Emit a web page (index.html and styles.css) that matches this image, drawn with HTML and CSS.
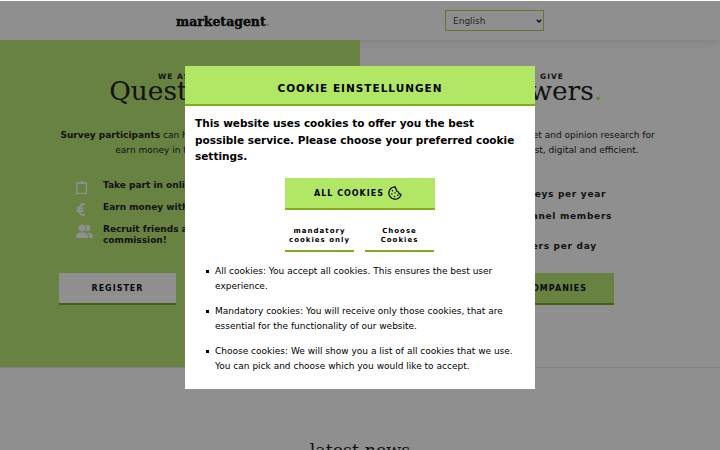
FILE: index.html
```
<!DOCTYPE html>
<html lang="en">
<head>
  <meta charset="UTF-8">
  <title>marketagent.</title>
  <link rel="stylesheet" href="styles.css">
</head>
<body>
  <header class="header">
    <svg class="logo" width="96" height="24" viewBox="0 0 96 24">
      <text x="0" y="16" textLength="94" lengthAdjust="spacingAndGlyphs">marketagent<tspan class="dot">.</tspan></text>
    </svg>
    <div class="language-box">
      <select class="language">
        <option>English</option>
        <option>Deutsch</option>
      </select>
      <svg class="arrow" width="6" height="4" viewBox="0 0 6 4"><path d="M.8.8 3 3 5.200.8" fill="none" stroke="#111" stroke-width="1.300"/></svg>
    </div>
  </header>

  <main class="split">
    <section class="side participants">
      <div class="kicker">WE ASK</div>
      <h1>Questions.</h1>
      <p class="intro"><b>Survey participants</b> can have a say in surveys and<br>earn money in the free time.</p>
      <ul class="benefits">
        <li>
          <svg width="18" height="16" viewBox="0 0 18 16"><path d="M.8 2.800h9.600v10.600H.8z" fill="none" stroke="currentColor" stroke-width="1.400" stroke-linejoin="round"/><path d="M3 1.800h1.500q1-2 2 0H8v2H3z" fill="currentColor"/></svg>
          <span>Take part in online surveys</span>
        </li>
        <li>
          <svg width="18" height="16" viewBox="0 0 18 16"><path d="M8.800 2.700C6 1 3 3.500 3 7.500s3 6.500 5.800 4.800M.5 6.200h7M.5 9h7" fill="none" stroke="currentColor" stroke-width="2"/></svg>
          <span>Earn money with surveys</span>
        </li>
        <li>
          <svg width="18" height="16" viewBox="0 0 18 16"><path d="M0 14v-2q0-3 4-3.500h4q4 .5 4 3.500v2zM13 14v-2q0-2-1.500-3.500 5 0 5.500 3.500v2z" fill="currentColor"/><circle cx="6" cy="4" r="3.500" fill="currentColor"/><path d="M9.500 7q2-3 0-6 4.500-1 5 3-.5 4-5 3z" fill="currentColor"/></svg>
          <span>Recruit friends and earn commission!</span>
        </li>
      </ul>
      <div class="buttons">
        <a class="btn btn-light">REGISTER</a>
        <a class="btn btn-light login">LOGIN</a>
      </div>
    </section>

    <section class="side companies">
      <div class="kicker">WE GIVE</div>
      <h1>Answers<span class="dot">.</span></h1>
      <p class="intro">We conduct quick market and opinion research for<br>companies: really fast, digital and efficient.</p>
      <ul class="facts">
        <li>20,000 surveys per year</li>
        <li>2.55 mio. panel members</li>
        <li>5,000 answers per day</li>
      </ul>
      <div class="buttons">
        <a class="btn btn-green">FOR COMPANIES</a>
      </div>
    </section>
  </main>

  <section class="news">
    <h2>latest news</h2>
  </section>

  <div class="overlay">
    <div class="modal">
      <div class="modal-title">COOKIE EINSTELLUNGEN</div>
      <div class="modal-body">
        <p class="lead">This website uses cookies to offer you the best possible service. Please choose your preferred cookie settings.</p>
        <div class="choices">
          <button class="all-btn">ALL COOKIES
            <svg width="14" height="14" viewBox="0 0 14 14">
              <path d="M6.500.8a6.200 6.200 0 1 0 6.700 6.700C11.500 7.700 10.600 7 10.500 5.500 8.500 5.600 7.800 4.500 8.100 3.200 7 3 6.400 2.200 6.500.8z" transform="rotate(8 7 7)" fill="none" stroke="currentColor" stroke-width="1.200" stroke-linejoin="round"/>
              <g fill="currentColor"><circle cx="4.500" cy="4.700" r=".8"/><circle cx="3.900" cy="8" r=".8"/><circle cx="7" cy="7" r=".7"/><circle cx="6.500" cy="10.500" r=".8"/><circle cx="9.700" cy="9.200" r=".8"/></g>
            </svg>
          </button>
          <div class="small-choices">
            <button class="small-btn">mandatory cookies only</button>
            <button class="small-btn">Choose Cookies</button>
          </div>
        </div>
        <ul class="info">
          <li>All cookies: You accept all cookies. This ensures the best user experience.</li>
          <li>Mandatory cookies: You will receive only those cookies, that are essential for the functionality of our website.</li>
          <li>Choose cookies: We will show you a list of all cookies that we use. You can pick and choose which you would like to accept.</li>
        </ul>
      </div>
    </div>
  </div>
</body>
</html>
```
FILE: styles.css
```
* {
  box-sizing: border-box;
}
body {
  margin: 0;
  height: 450px;
  overflow: hidden;
  background: #fff;
  color: #222;
  font-family: "DejaVu Sans", sans-serif;
  font-size: 9px;
}
h1, h2, p, ul {
  margin: 0;
  padding: 0;
}
.header {
  display: flex;
  gap: 173px;
  height: 40px;
  padding: 10px 0 0 176px;
  box-shadow: 0 1px 8px rgba(0, 0, 0, 0.12);
}
.logo {
  fill: #111;
  stroke: #111;
  stroke-width: 0.4;
  font-family: "DejaVu Serif", serif;
  font-size: 13px;
  font-weight: bold;
}
.dot {
  color: #b1e765;
  fill: #b1e765;
  stroke: none;
}
.language-box {
  position: relative;
  height: 21px;
}
.language {
  appearance: none;
  width: 99px;
  height: 21px;
  padding: 0 0 0 7px;
  border: 1px solid #b8cc60;
  border-radius: 0;
  background: transparent;
  color: #444;
  font-family: "DejaVu Sans", sans-serif;
  font-size: 9px;
}
.arrow {
  position: absolute;
  top: 9px;
  right: 2px;
}
.split {
  display: flex;
  height: 328px;
  border-bottom: 1px solid #ebebeb;
}
.side {
  width: 360px;
  padding-top: 31px;
  text-align: center;
}
.participants {
  height: 327px;
  background: #b8e875;
}
.kicker {
  font-size: 7.5px;
  font-weight: bold;
  letter-spacing: 1px;
  line-height: 11px;
}
.participants .kicker {
  padding-right: 5px;
}
.companies .kicker {
  padding-left: 5px;
}
h1, h2 {
  font-family: "DejaVu Serif", serif;
  font-weight: normal;
}
h1 {
  font-size: 26.4px;
  line-height: 30px;
  margin-top: -6px;
}
.companies h1 {
  padding-left: 2px;
}
.intro {
  margin-top: 22px;
  font-size: 9px;
  line-height: 15px;
}
.companies .intro {
  padding-left: 2px;
}
.benefits {
  height: 93px;
  margin: 22px 0 0 76px;
  list-style: none;
  text-align: left;
  font-weight: bold;
  line-height: 11px;
}
.benefits li {
  display: flex;
  gap: 9px;
  width: 170px;
  min-height: 22px;
}
.benefits svg {
  flex: none;
  color: #fff;
}
.buttons {
  display: flex;
  justify-content: center;
  gap: 10px;
}
.btn {
  width: 117px;
  height: 32px;
  border-bottom: 2px solid #76a82a;
  font-size: 8px;
  font-weight: bold;
  letter-spacing: 1px;
  line-height: 31px;
  color: #111;
}
.btn-light {
  background: #fff;
}
.login {
  width: 115px;
}
.btn-green {
  width: 148px;
  padding-left: 7px;
  background: #b8e875;
}
.facts {
  height: 84px;
  margin: 31px 0 0 107px;
  list-style: none;
  text-align: left;
  font-weight: bold;
  letter-spacing: 0.7px;
  line-height: 11px;
}
.facts li {
  height: 21.5px;
}
.facts li:last-child {
  margin-top: 9px;
}
.news {
  padding-top: 68px;
  text-align: center;
}
h2 {
  font-size: 17.5px;
  line-height: 28px;
}
.overlay {
  position: absolute;
  top: 1px;
  left: 0;
  right: 0;
  bottom: 0;
  background: rgba(0, 0, 0, 0.44);
}
.modal {
  width: 350px;
  height: 323px;
  margin: 65px auto 0;
  background: #fff;
  color: #000;
}
.modal-title {
  height: 40px;
  padding-top: 1px;
  border-bottom: 2px solid #80ad18;
  background: #b1e765;
  font-size: 10.5px;
  font-weight: bold;
  letter-spacing: 1px;
  line-height: 42px;
  text-align: center;
}
.modal-body {
  padding: 9px 10px;
}
.lead {
  font-size: 10.5px;
  font-weight: bold;
  line-height: 16.5px;
}
.choices {
  width: 150px;
  margin: 13px auto 0;
}
.choices button {
  border: none;
  border-bottom: 2px solid #80ad18;
  background: #fff;
  color: #000;
  font-family: "DejaVu Sans", sans-serif;
  font-weight: bold;
  letter-spacing: 1px;
}
.choices .all-btn {
  display: flex;
  align-items: center;
  justify-content: center;
  gap: 4px;
  width: 150px;
  height: 32px;
  padding: 1px 10px 0 6px;
  background: #b1e765;
  font-size: 8px;
}
.small-choices {
  display: flex;
  gap: 11px;
  margin-top: 10px;
}
.choices .small-btn {
  width: 69px;
  height: 32px;
  padding: 2px 0 0;
  font-size: 7px;
  line-height: 8.5px;
}
.info {
  margin-top: 12px;
  padding-left: 20px;
  line-height: 15px;
  list-style: none;
}
.info li {
  margin-bottom: 10px;
}
.info li::before {
  content: "";
  display: inline-block;
  width: 3px;
  height: 3px;
  margin: 0 6px 0 -9px;
  vertical-align: 1px;
  background: #000;
}
```
